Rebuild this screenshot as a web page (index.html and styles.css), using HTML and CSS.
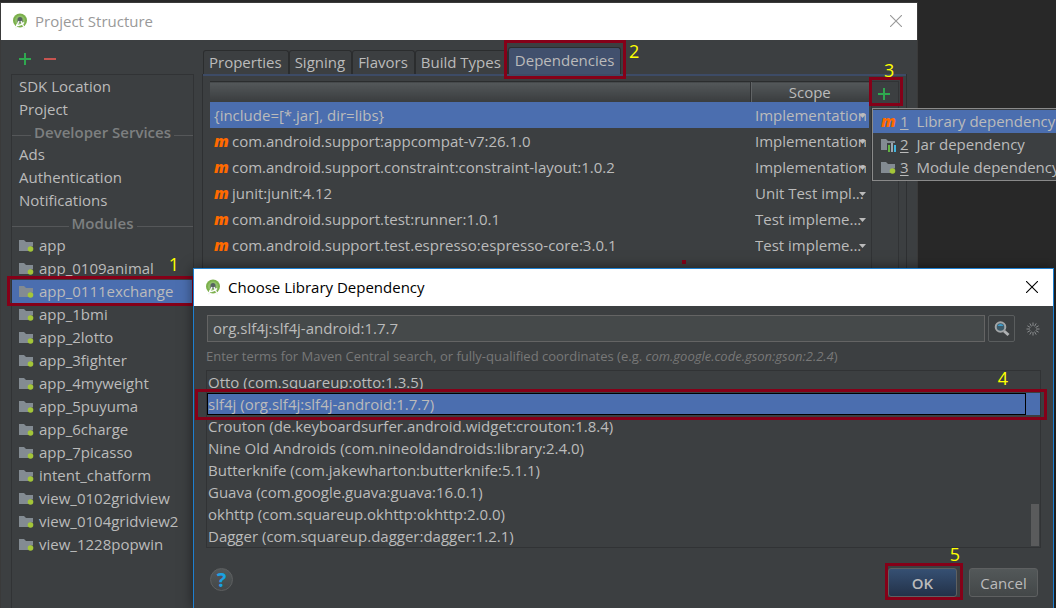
FILE: index.html
```html
<!DOCTYPE html>
<html lang="en">

	<head>
		<meta charset="UTF-8">
		<title>Project Structure</title>
		<link rel="stylesheet" href="styles.css">
	</head>

	<body>
		<!-- shared icons -->
		<svg class="defs" width="0" height="0" aria-hidden="true">
			<symbol id="i-folder" viewBox="0 0 16 14">
				<path d="M0 1h5l2 2h7v4.500a4 4 0 0 0-4.500 4.500H0z" fill="#838b92" />
				<circle cx="11.500" cy="10" r="2.800" fill="#a4c639" />
			</symbol>
			<symbol id="i-studio" viewBox="0 0 16 16">
				<circle cx="8" cy="7.500" r="7" fill="#7cb04c" />
				<circle cx="8" cy="7.500" r="5" fill="#8fbf69" />
				<path d="M5.500 6.500a2.500 2.500 0 0 1 5 0v3h-5z" fill="#56625f" />
				<path d="M7 8L3.500 15.500M9 8l3.500 7.500" stroke="#f4f4f4" stroke-width="1.500" />
				<path d="M4 12q4 1.500 8-2.500" stroke="#fff" stroke-width="1.500" fill="none" />
			</symbol>
			<symbol id="i-close" viewBox="0 0 12 12">
				<path d="M0 0l12 12M12 0L0 12" stroke="currentColor" stroke-width="1.100" />
			</symbol>
			<symbol id="i-plus" viewBox="0 0 12 12">
				<path d="M6 0v12M0 6h12" stroke="#2fa84f" stroke-width="2" />
			</symbol>
		</svg>

		<div class="window project">
			<div class="titlebar">
				<svg class="logo"><use href="#i-studio" /></svg>
				<span>Project Structure</span>
				<button class="close" aria-label="Close"><svg><use href="#i-close" /></svg></button>
			</div>
			<div class="main">
				<div class="side">
					<div class="tools">
						<button aria-label="Add module"><svg><use href="#i-plus" /></svg></button>
						<button aria-label="Remove module"><svg viewBox="0 0 12 12"><path d="M0 6h12" stroke="#c75450" stroke-width="2" /></svg></button>
					</div>
					<nav>
						<a href="#">SDK Location</a>
						<a href="#">Project</a>
						<h2>Developer Services</h2>
						<a href="#">Ads</a>
						<a href="#">Authentication</a>
						<a href="#">Notifications</a>
						<h2>Modules</h2>
						<a href="#"><svg><use href="#i-folder" /></svg>app</a>
						<a href="#"><svg><use href="#i-folder" /></svg>app_0109animal</a>
						<div class="step step1">
							<a href="#" class="current"><svg><use href="#i-folder" /></svg>app_0111exchange</a>
							<b class="num">1</b>
						</div>
						<a href="#"><svg><use href="#i-folder" /></svg>app_1bmi</a>
						<a href="#"><svg><use href="#i-folder" /></svg>app_2lotto</a>
						<a href="#"><svg><use href="#i-folder" /></svg>app_3fighter</a>
						<a href="#"><svg><use href="#i-folder" /></svg>app_4myweight</a>
						<a href="#"><svg><use href="#i-folder" /></svg>app_5puyuma</a>
						<a href="#"><svg><use href="#i-folder" /></svg>app_6charge</a>
						<a href="#"><svg><use href="#i-folder" /></svg>app_7picasso</a>
						<a href="#"><svg><use href="#i-folder" /></svg>intent_chatform</a>
						<a href="#"><svg><use href="#i-folder" /></svg>view_0102gridview</a>
						<a href="#"><svg><use href="#i-folder" /></svg>view_0104gridview2</a>
						<a href="#"><svg><use href="#i-folder" /></svg>view_1228popwin</a>
					</nav>
				</div>
				<div class="content">
					<div class="tabs">
						<button>Properties</button>
						<button>Signing</button>
						<button>Flavors</button>
						<button>Build Types</button>
						<div class="step step2">
							<button class="current">Dependencies</button>
							<b class="num">2</b>
						</div>
					</div>
					<div class="panel">
						<table>
							<thead>
								<tr><th></th><th class="scope">Scope</th></tr>
							</thead>
							<tbody>
								<tr class="current">
									<td>{include=[*.jar], dir=libs}</td>
									<td><select aria-label="Scope of libs"><option>Implementation</option></select></td>
								</tr>
								<tr>
									<td><i class="m">m</i>com.android.support:appcompat-v7:26.1.0</td>
									<td><select aria-label="Scope of appcompat"><option>Implementation</option></select></td>
								</tr>
								<tr>
									<td><i class="m">m</i>com.android.support.constraint:constraint-layout:1.0.2</td>
									<td><select aria-label="Scope of constraint-layout"><option>Implementation</option></select></td>
								</tr>
								<tr>
									<td><i class="m">m</i>junit:junit:4.12</td>
									<td><select aria-label="Scope of junit"><option>Unit Test impl...</option></select></td>
								</tr>
								<tr>
									<td><i class="m">m</i>com.android.support.test:runner:1.0.1</td>
									<td><select aria-label="Scope of runner"><option>Test impleme...</option></select></td>
								</tr>
								<tr>
									<td><i class="m">m</i>com.android.support.test.espresso:espresso-core:3.0.1</td>
									<td><select aria-label="Scope of espresso-core"><option>Test impleme...</option></select></td>
								</tr>
							</tbody>
						</table>
						<div class="actions">
							<div class="step step3">
								<button aria-label="Add dependency"><svg><use href="#i-plus" /></svg></button>
								<b class="num">3</b>
							</div>
						</div>
					</div>
				</div>
			</div>
		</div>

		<div class="menu">
			<button class="current"><i class="m">m</i><u>1</u>Library dependency</button>
			<button>
				<svg viewBox="0 0 16 14">
					<path d="M0 1h5l2 2h7v2H6v7H0z" fill="#838b92" />
					<path d="M7 7h2v7H7z" fill="#62b543" />
					<path d="M10 5h2v9h-2z" fill="#9aa7b0" />
					<path d="M13 7h2v7h-2z" fill="#40b6e0" />
				</svg><u>2</u>Jar dependency
			</button>
			<button><svg><use href="#i-folder" /></svg><u>3</u>Module dependency</button>
		</div>

		<i class="dot"></i>

		<div class="window dialog">
			<div class="titlebar">
				<svg class="logo"><use href="#i-studio" /></svg>
				<span>Choose Library Dependency</span>
				<button class="close" aria-label="Close"><svg><use href="#i-close" /></svg></button>
			</div>
			<div class="body">
				<div class="search">
					<input type="text" id="term" aria-label="Library" value="org.slf4j:slf4j-android:1.7.7">
					<button aria-label="Search">
						<svg viewBox="0 0 16 16">
							<path d="M10 10l4.500 4" stroke="#afb1b3" stroke-width="3" />
							<circle cx="6.500" cy="6" r="4.800" fill="#3d5a69" stroke="#a3a6a8" stroke-width="2" />
							<path d="M3.500 5a3.200 3.200 0 0 1 6 0z" fill="#3f9bc8" />
						</svg>
					</button>
					<svg class="spinner" viewBox="-7 -7 14 14">
						<g stroke="#8a8d8f" stroke-width="1">
							<path d="M0-3v-3.500M0 3v3.500M-3 0h-3.500M3 0h3.500M1.500-2.600l1.700-3M2.600-1.500l3-1.700M2.600 1.500l3 1.700M1.500 2.600l1.700 3M-1.500 2.600l-1.700 3M-2.600 1.500l-3 1.700M-2.600-1.500l-3-1.700M-1.500-2.600l-1.700-3" />
						</g>
					</svg>
				</div>
				<label class="hint" for="term">Enter terms for Maven Central search, or fully-qualified coordinates (e.g. <em>com.google.code.gson:gson:2.2.4</em>)</label>
				<ul>
					<li>Otto (com.squareup:otto:1.3.5)</li>
					<li class="step step4 current"><span>slf4j (org.slf4j:slf4j-android:1.7.7)</span><b class="num">4</b></li>
					<li>Crouton (de.keyboardsurfer.android.widget:crouton:1.8.4)</li>
					<li>Nine Old Androids (com.nineoldandroids:library:2.4.0)</li>
					<li>Butterknife (com.jakewharton:butterknife:5.1.1)</li>
					<li>Guava (com.google.guava:guava:16.0.1)</li>
					<li>okhttp (com.squareup.okhttp:okhttp:2.0.0)</li>
					<li>Dagger (com.squareup.dagger:dagger:1.2.1)</li>
				</ul>
				<div class="foot">
					<button class="help">?</button>
					<div class="step step5">
						<button class="ok">OK</button>
						<b class="num">5</b>
					</div>
					<button>Cancel</button>
				</div>
			</div>
		</div>
	</body>

</html>
```

FILE: styles.css
```css
* {
	margin: 0;
	padding: 0;
	box-sizing: border-box;
}

body {
	height: 100vh;
	overflow: hidden;
	position: relative;
	background: #282828;
	color: #bbb;
	font: 15px/22px "Open Sans", "Noto Sans", sans-serif;
	white-space: nowrap;
}

button,
input,
select {
	font: inherit;
	color: inherit;
	border: 0;
	background: none;
}

a {
	color: inherit;
	text-decoration: none;
}

ul {
	list-style: none;
}

svg {
	display: block;
	flex: none;
}

.defs {
	position: absolute;
}

/*窗口*/
.window {
	position: absolute;
	bottom: 0;
	display: flex;
	flex-direction: column;
	background: #3c3f41;
}

.project {
	left: 1px;
	top: 3px;
	right: 139px;
	box-shadow: 0 0 0 1px #3a3a3a;
}

.dialog {
	left: 193px;
	top: 268px;
	right: 2px;
	border: 1px solid #1e7fd0;
	border-bottom: 0;
	box-shadow: 0 0 12px rgba(0, 0, 0, 0.5);
}

.titlebar {
	display: flex;
	align-items: center;
	height: 37px;
	flex: none;
	padding: 0 15px 2px 11px;
	background: #fff;
	color: #999;
}

.dialog .titlebar {
	color: #000;
}

.logo {
	width: 16px;
	height: 16px;
	margin-right: 7px;
}

.close {
	margin-left: auto;
}

.close svg,
.tools svg,
.actions svg {
	width: 12px;
	height: 12px;
}

/*左侧列表*/
.main {
	display: flex;
	flex: 1;
	min-height: 0;
}

.side {
	display: flex;
	flex-direction: column;
	width: 183px;
	margin-left: 10px;
}

.tools {
	display: flex;
	gap: 13px;
	padding: 13px 8px 9px;
}

nav {
	flex: 1;
	border: 1px solid #313335;
	border-bottom: 0;
}

nav a {
	display: flex;
	align-items: center;
	height: 23px;
	padding: 0 0 2px 7px;
}

nav a svg {
	width: 16px;
	height: 14px;
	margin: 3px 4px 0 0;
}

nav h2 {
	display: flex;
	align-items: center;
	gap: 3px;
	height: 22px;
	color: #7d7f80;
	font-size: 15px;
	font-weight: 600;
}

nav h2:before,
nav h2:after {
	content: "";
	flex: 1;
	height: 1px;
	margin-top: 6px;
	background: #555759;
}

.current {
	background-color: #4b6eaf;
}

/*标签页*/
.content {
	display: flex;
	flex-direction: column;
	flex: 1;
	margin: 7px 10px 0 8px;
}

.tabs {
	display: flex;
	align-items: flex-end;
	padding-left: 1px;
}

.tabs button {
	height: 24px;
	padding: 0 6px 2px 5px;
	border: 1px solid #2b2d2e;
	border-bottom: 0;
	border-radius: 3px 3px 0 0;
}

.tabs button.current {
	height: 27px;
	padding: 0 6px 2px;
	background: #41506d;
}

.panel {
	display: flex;
	flex: 1;
	padding: 7px 7px 0;
	border: 1px solid #2e3032;
	border-top: 0;
	box-shadow: inset 0 2px #3d4b66;
}

table {
	flex: 1;
	align-self: flex-start;
	border-collapse: collapse;
	table-layout: fixed;
	border-top: 1px solid #2b2d2e;
}

th {
	height: 20px;
	background: linear-gradient(#54585a, #393c3e);
	font-weight: normal;
	line-height: 18px;
}

th.scope {
	width: 119px;
	border-left: 1px solid #2f3133;
	box-shadow: inset 1px 0 #616466;
}

td {
	height: 26px;
	padding-left: 4px;
	line-height: 24px;
}

td + td {
	padding-left: 5px;
}

.m {
	display: inline-block;
	width: 18px;
	color: #ff6a00;
	font-size: 16px;
	font-weight: 800;
	font-style: italic;
	line-height: 20px;
}

select {
	display: block;
	width: 111px;
	height: 24px;
	appearance: none;
	background: url("data:image/svg+xml,%3Csvg xmlns='http://www.w3.org/2000/svg' width='7' height='4'%3E%3Cpath d='M0 0h7L3.500 4z' fill='%23bbb'/%3E%3C/svg%3E") no-repeat right 11px;
}

.actions {
	width: 28px;
	margin-left: 2px;
	border: 1px solid #313335;
	border-bottom: 0;
}

.actions button {
	display: block;
	padding: 6px;
}

/*弹出菜单*/
.menu {
	position: absolute;
	left: 872px;
	top: 108px;
	right: -8px;
	z-index: 1;
	padding: 1px 0;
	border: 1px solid #8a8a8a;
	background: #3c3f41;
}

.menu button {
	display: flex;
	align-items: center;
	width: 100%;
	height: 23px;
	padding: 0 0 2px 8px;
}

.menu svg {
	width: 16px;
	height: 14px;
	margin: 3px 3px 0 0;
}

.menu .m {
	width: 19px;
	text-align: left;
}

.menu u {
	margin-right: 8px;
	text-underline-offset: 2px;
}

/*对话框*/
.body {
	display: flex;
	flex-direction: column;
	flex: 1;
	padding: 9px 12px 0;
}

.search {
	display: flex;
	align-items: center;
	gap: 3px;
	padding-right: 1px;
}

.search input {
	flex: 1;
	height: 27px;
	margin-left: 1px;
	padding: 0 5px 2px;
	border: 1px solid #646464;
	background: #45494a;
}

.search button {
	width: 27px;
	height: 27px;
	padding: 5px;
	border: 1px solid #5a5d5e;
	border-radius: 2px;
}

.search button svg {
	width: 16px;
	height: 16px;
}

.spinner {
	width: 14px;
	height: 14px;
	margin-left: 8px;
}

.hint {
	height: 28px;
	color: #787878;
	font-size: 13px;
	line-height: 28px;
}

.dialog ul {
	position: relative;
	border: 1px solid #313335;
}

/*滚动条*/
.dialog ul:after {
	content: "";
	position: absolute;
	right: 1px;
	bottom: 1px;
	width: 8px;
	height: 42px;
	background: #5a5b5c;
}

.dialog li {
	height: 22px;
	padding-left: 1px;
}

.dialog li.current {
	padding: 0 14px 0 0;
}

.dialog li span {
	display: block;
	height: 22px;
	border: 1px solid #000;
	line-height: 20px;
}

.foot {
	display: flex;
	align-items: flex-start;
	gap: 12px;
	padding: 20px 3px 0 4px;
}

.foot button {
	width: 69px;
	height: 29px;
	border: 1px solid #5e6061;
	border-radius: 3px;
	background: linear-gradient(#535859, #434748);
}

.foot .ok {
	display: block;
	background: linear-gradient(#365073, #233249);
	font-weight: 600;
}

.foot .help {
	width: 23px;
	height: 23px;
	margin-right: auto;
	border-radius: 50%;
	color: #1ba1e2;
	font-size: 20px;
	font-weight: 700;
	line-height: 20px;
}

/*步骤标记*/
.step {
	position: relative;
}

.step:after {
	content: "";
	position: absolute;
	border: 3px solid #850018;
	pointer-events: none;
}

.num {
	position: absolute;
	color: #ff0;
	font-size: 18px;
	font-weight: 400;
	line-height: 20px;
}

.step1:after {
	inset: -4px -2px -3px -5px;
}

.step1 .num {
	right: 14px;
	top: -26px;
}

.step2:after {
	inset: -7px -5px -5px -4px;
}

.step2 .num {
	right: -18px;
	top: -6px;
}

.step3:after {
	inset: -5px -5px 0 -3px;
}

.step3 .num {
	left: 12px;
	top: -22px;
}

.step4:after {
	inset: -4px -7px -5px -12px;
}

.step4 .num {
	right: 32px;
	top: -25px;
}

.step5:after {
	inset: -5px -6px -3px -3px;
}

.step5 .num {
	right: -3px;
	top: -24px;
}

.dot {
	position: absolute;
	left: 682px;
	top: 260px;
	width: 4px;
	height: 4px;
	background: #850018;
}
```
